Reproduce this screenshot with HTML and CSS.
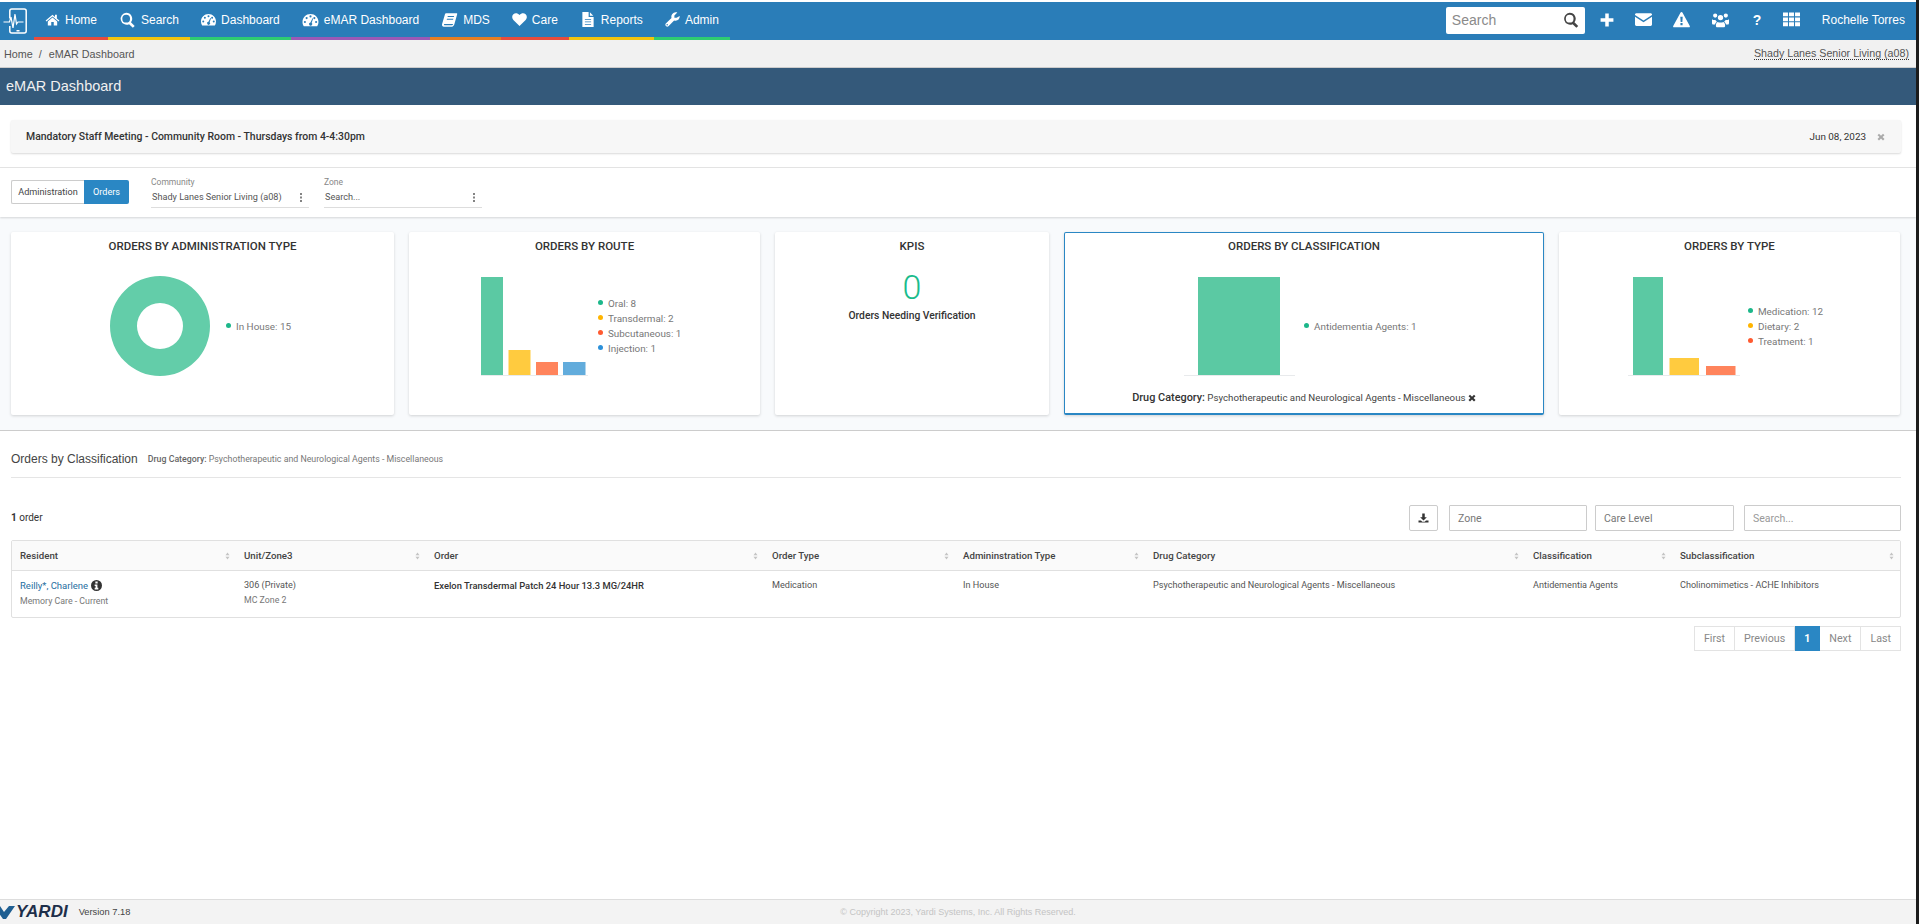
FILE: index.html
```html
<!DOCTYPE html>
<html lang="en">
<head>
<meta charset="utf-8">
<title>eMAR Dashboard</title>
<link rel="stylesheet" href="styles.css">
</head>
<body>
<svg class="defs" width="0" height="0" aria-hidden="true">
  <symbol id="i-home" viewBox="0 0 24 24"><path d="M12 4.500 1 13.600l1.300 1.500L12 7l9.700 8.100 1.300-1.500-4-3.300V4.500h-3v3.300zM12 8.800 4.500 15v6.500h5.500V16h4v5.500h5.500V15z"/></symbol>
  <symbol id="i-search" viewBox="0 0 24 24"><path fill-rule="evenodd" d="M10 1a9 9 0 0 1 7.200 14.400l5.600 5.600-2.800 2.800-5.600-5.600A9 9 0 1 1 10 1zm0 3.200a5.800 5.800 0 1 0 0 11.600 5.800 5.800 0 0 0 0-11.600z"/></symbol>
  <symbol id="i-gauge" viewBox="0 0 24 24"><path fill-rule="evenodd" d="M12 3C5.400 3 0 8.300 0 15c0 2.400.7 4.600 1.900 6.400h20.200A11.800 11.800 0 0 0 24 15c0-6.700-5.400-12-12-12zM12 5a1.600 1.600 0 1 1 0 3.200A1.600 1.600 0 0 1 12 5zM6.200 7.500a1.600 1.600 0 1 1 0 3.200 1.600 1.600 0 0 1 0-3.200zm11.600 0a1.600 1.600 0 1 1 0 3.200 1.600 1.600 0 0 1 0-3.200zM3.600 13.400a1.600 1.600 0 1 1 0 3.200 1.600 1.600 0 0 1 0-3.200zm16.800 0a1.600 1.600 0 1 1 0 3.200 1.600 1.600 0 0 1 0-3.200zM15 9.500l1 .4-2.200 6.400a2.400 2.400 0 1 1-1.900-.6z"/></symbol>
  <symbol id="i-book" viewBox="0 0 24 24"><path fill-rule="evenodd" d="M7 2h15.500c.9 0 1.300.7 1 1.500l-4.200 15c-.5 1.700-1.700 3.500-3.800 3.500H3.500C1.600 22 .4 20.500.8 18.500L5 4c.3-1.100 1-2 2-2zm2.500 4-.5 1.500h9.500L19 6zM8.300 10l-.5 1.500h9.500l.5-1.500zM4 18c-.6 1.200 0 2 1.200 2h10.300c.9 0 1.500-.5 1.800-1.500l.2-.5z"/></symbol>
  <symbol id="i-heart" viewBox="0 0 24 24"><path d="M12 22.500 2.200 12.700C-.2 10.300-.5 6 2.200 3.500 4.800 1 9 1.200 12 4.700c3-3.500 7.200-3.700 9.800-1.200 2.700 2.500 2.400 6.800 0 9.200z"/></symbol>
  <symbol id="i-file" viewBox="0 0 24 24"><path fill-rule="evenodd" d="M3 0h10v8h8v16H3zM15 .5 20.500 6H15zM7 11v1.500h10V11zm0 4v1.500h10V15zm0 4v1.500h10V19z"/></symbol>
  <symbol id="i-wrench" viewBox="0 0 24 24"><path fill-rule="evenodd" d="M23.500 6.500c.5 3.800-2.300 7.500-6.500 7.500-.9 0-1.700-.1-2.400-.4L5.500 22.700a3 3 0 0 1-4.200-4.200l9.100-9.100A7 7 0 0 1 17.500.5c.8 0 1.500.2 2.200.4L15 5.500v3.500h3.500zM3.500 19.300a1.200 1.200 0 1 0 0 2.400 1.200 1.200 0 0 0 0-2.400z"/></symbol>
  <symbol id="i-plus" viewBox="0 0 24 24"><path d="M9 1h6v8h8v6h-8v8H9v-8H1V9h8z"/></symbol>
  <symbol id="i-mail" viewBox="0 0 24 24"><path d="M2 3h20c1.100 0 2 .9 2 2v.6L12 13.500 0 5.600V5c0-1.100.9-2 2-2zM0 8l12 8 12-8v11c0 1.100-.9 2-2 2H2c-1.100 0-2-.9-2-2z"/></symbol>
  <symbol id="i-warn" viewBox="0 0 24 24"><path fill-rule="evenodd" d="M12 1.500c.7 0 1.200.4 1.500 1l10.200 18.600c.5 1-.2 1.900-1.200 1.900H1.500c-1 0-1.700-.9-1.200-1.900L10.500 2.500c.3-.6.800-1 1.500-1zM10.300 8l.5 7.500h2.400l.5-7.500zm.2 9v3h3v-3z"/></symbol>
  <symbol id="i-users" viewBox="0 0 24 24"><path d="M12 5.500a3.800 3.800 0 1 1 0 7.600 3.800 3.800 0 0 1 0-7.600zM4.500 3.500a3 3 0 1 1 0 6 3 3 0 0 1 0-6zm15 0a3 3 0 1 1 0 6 3 3 0 0 1 0-6zM0 11.500c1 .9 2.800 1.500 4.800 1.200.6 1.300 1.300 2 2.200 2.500-1.500.8-2.500 2.300-2.700 4H1.500C.5 19.200 0 18.200 0 17zm24 0V17c0 1.200-.5 2.200-1.500 2.200h-2.800c-.2-1.700-1.200-3.200-2.700-4 .9-.5 1.600-1.200 2.200-2.500 2 .3 3.800-.3 4.800-1.200zM8 15.500c2.200 1.100 5.800 1.100 8 0 1.500.8 2.500 2.500 2.500 4.500v1c0 1.100-.9 1.800-2 1.800h-9c-1.100 0-2-.7-2-1.800v-1c0-2 1-3.700 2.500-4.500z"/></symbol>
  <symbol id="i-grid" viewBox="0 0 24 24"><path d="M0 2h7v5.500H0zm8.500 0h7v5.500h-7zM17 2h7v5.500h-7zM0 9h7v5.500H0zm8.500 0h7v5.500h-7zM17 9h7v5.500h-7zM0 16h7v5.500H0zm8.500 0h7v5.500h-7zM17 16h7v5.500h-7z"/></symbol>
  <symbol id="i-x" viewBox="0 0 24 24"><path d="M6 2.500 12 8.500l6-6L22.500 7l-6 5 6 6L18 22.500l-6-6-6 6L1.500 18l6-6-6-5z"/></symbol>
  <symbol id="i-down" viewBox="0 0 24 24"><path d="M9 1h6v9h5l-8 8-8-8h5zM0 18h6l3 3h6l3-3h6v5H0z"/></symbol>
  <symbol id="i-info" viewBox="0 0 24 24"><path fill-rule="evenodd" d="M12 0a12 12 0 1 1 0 24 12 12 0 0 1 0-24zM9.500 3.500v4h5v-4zM8 10v3h2v4H8v3.500h8V17h-2v-7z"/></symbol>
  <symbol id="i-sort" viewBox="0 0 10 16"><path d="M5 1 9 6.500H1zM5 15 1 9.500h8z"/></symbol>
  <symbol id="i-dots" viewBox="0 0 4 12"><path d="M.8 0h2.400v2.600H.8zm0 4.700h2.400v2.600H.8zm0 4.700h2.400V12H.8z"/></symbol>
</svg>

<div class="app">
  <header class="nav">
    <svg class="brand" viewBox="0 0 24 26" aria-hidden="true">
      <path d="M6.800 10.500V3a2 2 0 0 1 2-2h12.400a2 2 0 0 1 2 2v20a2 2 0 0 1-2 2H8.800a2 2 0 0 1-2-2v-5" fill="none" stroke="#fff" stroke-width="1.500"/>
      <rect x="13.500" y="22" width="3" height="1.500" fill="#fff"/>
      <path d="M.5 14h6l1.500-5 2 11 2-14 1.500 10 1.500-2h5.500" fill="none" stroke="#fff" stroke-width="1.200"/>
    </svg>
    <nav class="menu">
      <a class="mi c-red"><svg class="ico"><use href="#i-home"/></svg>Home</a>
      <a class="mi c-yel"><svg class="ico w2"><use href="#i-search"/></svg>Search</a>
      <a class="mi c-grn"><svg class="ico"><use href="#i-gauge"/></svg>Dashboard</a>
      <a class="mi c-pur"><svg class="ico w2"><use href="#i-gauge"/></svg>eMAR Dashboard</a>
      <a class="mi c-org"><svg class="ico w2"><use href="#i-book"/></svg>MDS</a>
      <a class="mi c-red"><svg class="ico"><use href="#i-heart"/></svg>Care</a>
      <a class="mi c-yel"><svg class="ico w1"><use href="#i-file"/></svg>Reports</a>
      <a class="mi c-grn"><svg class="ico"><use href="#i-wrench"/></svg>Admin</a>
    </nav>
    <div class="tools">
      <div class="topsearch"><span>Search</span><svg class="ts-ico"><use href="#i-search"/></svg></div>
      <svg class="t t-plus"><use href="#i-plus"/></svg>
      <svg class="t t-mail"><use href="#i-mail"/></svg>
      <svg class="t t-warn"><use href="#i-warn"/></svg>
      <svg class="t t-users"><use href="#i-users"/></svg>
      <span class="t-q">?</span>
      <svg class="t t-grid"><use href="#i-grid"/></svg>
      <span class="user">Rochelle Torres</span>
    </div>
  </header>

  <div class="crumbs">
    <div><span>Home</span><span class="sep">/</span><span>eMAR Dashboard</span></div>
    <span class="site">Shady Lanes Senior Living (a08)</span>
  </div>

  <div class="titlebar">eMAR Dashboard</div>

  <div class="notice-wrap">
    <div class="notice">
      <strong>Mandatory Staff Meeting - Community Room - Thursdays from 4-4:30pm</strong>
      <div class="notice-r"><span>Jun 08, 2023</span><svg class="nx"><use href="#i-x"/></svg></div>
    </div>
  </div>

  <div class="filters">
    <div class="btns"><span class="btn">Administration</span><span class="btn on">Orders</span></div>
    <div class="sel">
      <label>Community</label>
      <div class="sel-v"><span>Shady Lanes Senior Living (a08)</span><svg class="dots"><use href="#i-dots"/></svg></div>
    </div>
    <div class="sel">
      <label>Zone</label>
      <div class="sel-v"><span>Search...</span><svg class="dots"><use href="#i-dots"/></svg></div>
    </div>
  </div>

  <section class="cards">
    <article class="card">
      <h3>ORDERS BY ADMINISTRATION TYPE</h3>
      <div class="chart p-1">
        <svg class="ch-donut" viewBox="0 0 100 100"><path fill="#63cda9" fill-rule="evenodd" d="M50 0a50 50 0 1 1 0 100A50 50 0 0 1 50 0zm0 27a23 23 0 1 0 0 46 23 23 0 0 0 0-46z"/></svg>
        <ul class="legend l-1"><li><i class="d-g"></i>In House: 15</li></ul>
      </div>
    </article>
    <article class="card">
      <h3>ORDERS BY ROUTE</h3>
      <div class="chart p-2">
        <svg class="ch-route" viewBox="0 0 107 100">
          <rect x="0" y="1" width="22" height="98" fill="#5bc9a3"/>
          <rect x="27.500" y="74" width="22" height="25" fill="#ffcb3f"/>
          <rect x="55" y="86" width="22" height="13" fill="#ff845c"/>
          <rect x="82" y="86" width="22.500" height="13" fill="#62acdc"/>
          <rect x="0" y="99" width="107" height="1" fill="#e8eaec"/>
        </svg>
        <ul class="legend l-2">
          <li><i class="d-g"></i>Oral: 8</li>
          <li><i class="d-y"></i>Transdermal: 2</li>
          <li><i class="d-o"></i>Subcutaneous: 1</li>
          <li><i class="d-b"></i>Injection: 1</li>
        </ul>
      </div>
    </article>
    <article class="card">
      <h3>KPIS</h3>
      <div class="kpi">0</div>
      <div class="kpi-l">Orders Needing Verification</div>
    </article>
    <article class="card active">
      <h3>ORDERS BY CLASSIFICATION</h3>
      <div class="chart p-4">
        <svg class="ch-class" viewBox="0 0 111 100">
          <rect x="14" y="1" width="82" height="98" fill="#5bc9a3"/>
          <rect x="0" y="99" width="111" height="1" fill="#e8eaec"/>
        </svg>
        <ul class="legend l-4"><li><i class="d-g"></i>Antidementia Agents: 1</li></ul>
      </div>
      <div class="applied"><b>Drug Category:</b> Psychotherapeutic and Neurological Agents - Miscellaneous <svg class="ax"><use href="#i-x"/></svg></div>
    </article>
    <article class="card">
      <h3>ORDERS BY TYPE</h3>
      <div class="chart p-5">
        <svg class="ch-type" viewBox="0 0 112 100">
          <rect x="5" y="1" width="30" height="98" fill="#5bc9a3"/>
          <rect x="41.500" y="82" width="29.500" height="17" fill="#ffcb3f"/>
          <rect x="78" y="90" width="29.500" height="9" fill="#ff845c"/>
          <rect x="0" y="99" width="112" height="1" fill="#e8eaec"/>
        </svg>
        <ul class="legend l-5">
          <li><i class="d-g"></i>Medication: 12</li>
          <li><i class="d-y"></i>Dietary: 2</li>
          <li><i class="d-o"></i>Treatment: 1</li>
        </ul>
      </div>
    </article>
  </section>

  <main class="main">
    <div class="sec-head">
      <h2>Orders by Classification</h2>
      <span><b>Drug Category:</b> Psychotherapeutic and Neurological Agents - Miscellaneous</span>
    </div>
    <div class="toolbar">
      <div class="count"><b>1</b> order</div>
      <div class="controls">
        <span class="dl"><svg><use href="#i-down"/></svg></span>
        <span class="inp w-zone">Zone</span>
        <span class="inp w-care">Care Level</span>
        <span class="inp w-search">Search...</span>
      </div>
    </div>
    <table class="grid">
      <colgroup>
        <col class="c1"><col class="c2"><col class="c3"><col class="c4"><col class="c5"><col class="c6"><col class="c7"><col class="c8">
      </colgroup>
      <thead>
        <tr>
          <th><div>Resident<svg class="sort"><use href="#i-sort"/></svg></div></th>
          <th><div>Unit/Zone3<svg class="sort"><use href="#i-sort"/></svg></div></th>
          <th><div>Order<svg class="sort"><use href="#i-sort"/></svg></div></th>
          <th><div>Order Type<svg class="sort"><use href="#i-sort"/></svg></div></th>
          <th><div>Admininstration Type<svg class="sort"><use href="#i-sort"/></svg></div></th>
          <th><div>Drug Category<svg class="sort"><use href="#i-sort"/></svg></div></th>
          <th><div>Classification<svg class="sort"><use href="#i-sort"/></svg></div></th>
          <th><div>Subclassification<svg class="sort"><use href="#i-sort"/></svg></div></th>
        </tr>
      </thead>
      <tbody>
        <tr>
          <td><a class="link">Reilly*, Charlene</a> <svg class="info"><use href="#i-info"/></svg><div class="sub">Memory Care - Current</div></td>
          <td>306 (Private)<div class="sub">MC Zone 2</div></td>
          <td class="strong">Exelon Transdermal Patch 24 Hour 13.3 MG/24HR</td>
          <td>Medication</td>
          <td>In House</td>
          <td>Psychotherapeutic and Neurological Agents - Miscellaneous</td>
          <td>Antidementia Agents</td>
          <td>Cholinomimetics - ACHE Inhibitors</td>
        </tr>
      </tbody>
    </table>
    <div class="pager">
      <span>First</span><span>Previous</span><span class="cur">1</span><span>Next</span><span>Last</span>
    </div>
  </main>

  <footer class="foot">
    <div class="foot-l">
      <svg class="yardi-mark" viewBox="0 0 16 14"><path d="M-6 1h6l4 6 5-6h6L6 14H3z" fill="#1f5f92"/></svg>
      <span class="yardi">YARDI</span>
      <span class="ver">Version 7.18</span>
    </div>
    <div class="copy">© Copyright 2023, Yardi Systems, Inc. All Rights Reserved.</div>
    <div></div>
  </footer>
</div>
</body>
</html>
```
FILE: styles.css
```css
* { box-sizing: border-box; }
html, body { margin: 0; height: 100%; }
body {
  background: #1c1c1c;
  font-family: "Liberation Sans", Arial, sans-serif;
  color: #333;
  overflow: hidden;
}
.defs { position: absolute; }
svg { display: block; fill: currentColor; }
ul { list-style: none; margin: 0; padding: 0; }
h2, h3 { margin: 0; font-weight: 400; }

.app {
  width: 1916px;
  height: 924px;
  background: #fff;
  display: flex;
  flex-direction: column;
}

/* top bar */
.nav {
  margin-top: 2px;
  height: 38px;
  background: #2a7db8;
  display: flex;
  color: #fff;
  flex: none;
}
.brand { width: 24px; height: 26px; margin: 6px 0 0 3px; }
.menu { display: flex; margin-left: 7px; }
.mi {
  display: flex;
  align-items: center;
  gap: 5px;
  padding: 0 11px;
  font-size: 12px;
  height: 38px;
  border-bottom: 3px solid;
  white-space: nowrap;
}
.c-red { border-color: #e74c3c; }
.c-yel { border-color: #f1c40f; }
.c-grn { border-color: #2ecc71; }
.c-pur { border-color: #9b59b6; }
.c-org { border-color: #e67e22; }
.ico { width: 15px; height: 15px; }
.ico.w1 { width: 16px; }
.ico.w2 { width: 17px; height: 16px; }
.tools { margin-left: auto; display: flex; align-items: center; height: 38px; padding-bottom: 3px; }
.topsearch {
  width: 139px;
  height: 27px;
  margin-top: 1px;
  background: #fff;
  border-radius: 2px;
  display: flex;
  align-items: center;
  justify-content: space-between;
  padding: 0 6px 0 6px;
  color: #8a8a8a;
  font-size: 14px;
}
.ts-ico { width: 16px; height: 16px; color: #444; }
.t { width: 17px; height: 17px; }
.t-plus { width: 14px; height: 14px; margin-left: 15px; }
.t-mail { margin-left: 21px; }
.t-warn { margin-left: 21px; }
.t-users { margin-left: 22px; }
.t-q { font-size: 14px; font-weight: 700; width: 8px; margin-left: 24px; }
.t-grid { margin-left: 22px; }
.user { font-size: 12px; margin: 0 11px 0 22px; white-space: nowrap; }

/* breadcrumb */
.crumbs {
  height: 28px;
  flex: none;
  background: #f1f1f1;
  border-bottom: 1px solid #ccc;
  display: flex;
  align-items: center;
  justify-content: space-between;
  padding: 0 7px 0 4px;
  font-size: 10.800px;
  color: #555;
}
.sep { margin: 0 7px 0 6px; }
.site { border-bottom: 1px dotted #333; font-size: 10.700px; }

.titlebar {
  height: 37px;
  flex: none;
  background: #34597a;
  color: #f0f0f0;
  font-size: 14.500px;
  line-height: 36px;
  padding-left: 6px;
}

/* notice */
.notice-wrap { height: 63px; flex: none; padding: 15px 15px 0 11px; border-bottom: 1px solid #e5e5e5; }
.notice {
  height: 33px;
  background: #f7f7f7;
  border-radius: 2px;
  box-shadow: 0 1px 2px rgba(0,0,0,.15);
  display: flex;
  align-items: center;
  justify-content: space-between;
  padding: 0 15px;
  font-family: Roboto, sans-serif;
  font-size: 9.900px;
  color: #333;
}
.notice strong { font-weight: 500; font-size: 10.450px; }
.notice-r { display: flex; align-items: center; gap: 11px; }
.nx { width: 8px; height: 8px; color: #aaa; margin-right: 1px; }

/* filters */
.filters {
  height: 49px;
  flex: none;
  padding: 12px 0 0 11px;
  display: flex;
  box-shadow: 0 1px 2px rgba(0,0,0,.15);
  position: relative;
  font-family: Roboto, sans-serif;
}
.btns { display: flex; height: 24px; font-size: 9.100px; }
.btn {
  width: 73px;
  display: flex;
  align-items: center;
  justify-content: center;
  border: 1px solid #ccc;
  border-right: 0;
  border-radius: 2px 0 0 2px;
  color: #444;
}
.btn.on { width: 45px; background: #2a87c4; border: 0; border-radius: 0 2px 2px 0; color: #fff; }
.sel { width: 158px; margin: -3px 0 0 22px; font-size: 9.150px; color: #555; }
.sel + .sel { margin-left: 15px; }
.sel label { display: block; font-size: 8.500px; color: #888; line-height: 11px; height: 13px; }
.sel-v {
  display: flex;
  align-items: center;
  justify-content: space-between;
  height: 18px;
  padding: 0 6px 3px 1px;
  border-bottom: 1px solid #ddd;
}
.dots { width: 4px; height: 9px; color: #777; }

/* cards */
.cards {
  height: 214px;
  flex: none;
  background: #f8fafc;
  border-bottom: 1px solid #ccc;
  padding: 15px 15px 15px 11px;
  display: grid;
  grid-template-columns: 383px 351px 274px 480px 341px;
  gap: 15px;
}
.card {
  background: #fff;
  border-radius: 2px;
  box-shadow: 0 1px 3px rgba(0,0,0,.16);
  font-family: Roboto, sans-serif;
  height: 183px;
}
.card h3 {
  font-size: 11.500px;
  font-weight: 500;
  color: #333;
  text-align: center;
  line-height: 14px;
  padding-top: 7px;
  height: 44px;
}
.card.active { border: 1px solid #2a87c4; border-bottom-width: 2px; }
.card.active h3 { padding-top: 6px; height: 43px; }
.chart { display: flex; align-items: center; height: 100px; }
.p-1 { padding-left: 99px; }
.p-2 { padding-left: 72px; }
.p-4 { padding-left: 119px; }
.p-5 { padding-left: 69px; }
.ch-donut { width: 100px; height: 100px; }
.ch-route { width: 107px; height: 100px; }
.ch-class { width: 111px; height: 100px; }
.ch-type { width: 112px; height: 100px; }
.legend { font-size: 9.900px; color: #777; line-height: 15px; }
.legend li { display: flex; align-items: center; gap: 5px; white-space: nowrap; }
.legend i { width: 5px; height: 5px; border-radius: 50%; flex: none; margin-top: -2px; }
.d-g { background: #1cb78a; }
.d-y { background: #ffb400; }
.d-o { background: #ff5a30; }
.d-b { background: #2c90d9; }
.l-1 { margin-left: 16px; }
.l-2 { margin-left: 10px; }
.l-4 { margin-left: 9px; }
.l-5 { margin-left: 8px; }
.kpi { text-align: center; font-size: 34px; font-weight: 300; color: #1abc8c; line-height: 40px; margin-top: -9px; }
.kpi-l { text-align: center; font-size: 10.300px; font-weight: 500; color: #333; margin-top: 2px; }
.applied {
  text-align: center;
  margin-top: 15px;
  font-size: 9.700px;
  line-height: 14px;
  color: #444;
  white-space: nowrap;
}
.applied b { font-weight: 500; font-size: 10.900px; color: #333; }
.ax { display: inline-block; width: 8px; height: 8px; color: #333; vertical-align: -1px; }

/* main */
.main { flex: 1; padding: 0 15px 0 11px; font-family: Roboto, sans-serif; }
.sec-head {
  height: 47px;
  display: flex;
  align-items: center;
  gap: 10px;
  border-bottom: 1px solid #e5e5e5;
  padding-top: 10px;
  font-size: 8.800px;
  color: #777;
}
.sec-head h2 { font-family: "Liberation Sans", Arial, sans-serif; font-size: 12px; color: #444; }
.sec-head b { font-weight: 500; color: #666; }
.toolbar { display: flex; justify-content: space-between; align-items: center; height: 26px; margin-top: 27px; }
.count { font-size: 10px; color: #333; padding-bottom: 2px; }
.count b { font-weight: 700; }
.controls { display: flex; }
.dl {
  width: 29px;
  height: 26px;
  border: 1px solid #ccc;
  border-radius: 2px;
  display: flex;
  align-items: center;
  justify-content: center;
  margin-right: 11px;
  color: #333;
}
.dl svg { width: 11px; height: 10px; }
.inp {
  height: 26px;
  border: 1px solid #ccc;
  border-radius: 1px;
  padding: 0 8px;
  display: flex;
  align-items: center;
  font-size: 10.500px;
  color: #777;
}
.w-zone { width: 138px; margin-right: 8px; }
.w-care { width: 139px; margin-right: 10px; }
.w-search { width: 157px; color: #999; }

.grid {
  width: 1890px;
  margin-top: 9px;
  table-layout: fixed;
  border-collapse: separate;
  border-spacing: 0;
  border: 1px solid #e0e0e0;
  border-radius: 2px;
  font-size: 9.100px;
  color: #555;
}
.c1 { width: 224px; }
.c2 { width: 190px; }
.c3 { width: 338px; }
.c4 { width: 191px; }
.c5 { width: 190px; }
.c6 { width: 380px; }
.c7 { width: 147px; }
.c8 { width: 228px; }
.grid th {
  height: 30px;
  background: #fafafa;
  border-bottom: 1px solid #e0e0e0;
  padding: 0 6px 0 8px;
  text-align: left;
  font-size: 9.700px;
  font-weight: 500;
  color: #444;
}
.grid th div { display: flex; justify-content: space-between; align-items: center; }
.sort { width: 5px; height: 8px; color: #c4c4c4; margin-top: 1px; }
.grid td { padding: 7px 8px 0; height: 46px; vertical-align: top; line-height: 15px; }
.sub { color: #777; font-size: 8.800px; }
.link { color: #1f6f9f; font-size: 9.500px; }
.info { display: inline-block; width: 11px; height: 11px; color: #333; vertical-align: -2px; margin-left: 1px; }
.grid .strong { font-weight: 500; color: #333; font-size: 9.400px; }

.pager {
  display: flex;
  justify-content: flex-end;
  margin-top: 8px;
  font-size: 10.700px;
  color: #888;
}
.pager span {
  height: 25px;
  padding: 0 9px;
  display: flex;
  align-items: center;
  border: 1px solid #e3e3e3;
  border-left-width: 0;
}
.pager span:first-child { border-left-width: 1px; }
.pager .cur { background: #2a87c4; border-color: #2a87c4; color: #fff; font-weight: 700; }

/* footer */
.foot {
  height: 25px;
  flex: none;
  background: #f3f3f3;
  border-top: 1px solid #ddd;
  display: grid;
  grid-template-columns: 1fr auto 1fr;
  align-items: center;
  overflow: hidden;
}
.foot-l { display: flex; align-items: center; }
.yardi-mark { width: 16px; height: 14px; }
.yardi { font-weight: 700; font-style: italic; font-size: 17px; color: #1d2f4a; }
.ver { font-size: 9.300px; color: #444; margin-left: 11px; }
.copy { font-size: 9px; color: #c4c4c4; }
```
